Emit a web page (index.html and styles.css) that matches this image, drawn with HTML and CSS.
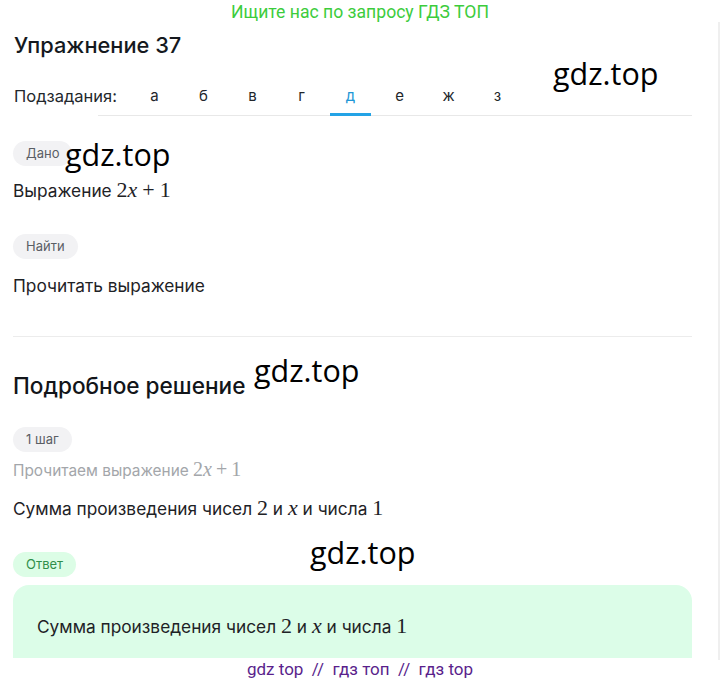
FILE: index.html
```html
<!DOCTYPE html>
<html lang="ru">
<head>
<meta charset="utf-8">
<link rel="stylesheet" href="styles.css">
</head>
<body>
<div class="banner">Ищите нас по запросу ГДЗ ТОП</div>
<main class="page">
  <h1 class="title">Упражнение 37</h1>
  <div class="subtasks">
    <span class="subtasks-label">Подзадания:</span>
    <nav class="tabs">
      <span class="tab">а</span>
      <span class="tab">б</span>
      <span class="tab">в</span>
      <span class="tab">г</span>
      <span class="tab active">д</span>
      <span class="tab">е</span>
      <span class="tab">ж</span>
      <span class="tab">з</span>
    </nav>
  </div>

  <section class="given">
    <span class="pill pill-given">Дано</span>
    <p class="text given-text">Выражение <span class="math">2<i>x</i><span class="op">+</span>1</span></p>
    <span class="pill pill-find">Найти</span>
    <p class="text find-text">Прочитать выражение</p>
  </section>

  <hr class="divider">

  <h2 class="subtitle">Подробное решение</h2>
  <span class="pill pill-step">1 шаг</span>
  <p class="text muted">Прочитаем выражение <span class="math">2<i>x</i><span class="op">+</span>1</span></p>
  <p class="text step-text">Сумма произведения чисел <span class="math">2</span> и <span class="math"><i>x</i></span> и числа <span class="math">1</span></p>

  <span class="pill pill-answer">Ответ</span>
  <div class="answer">
    <p class="text">Сумма произведения чисел <span class="math">2</span> и <span class="math"><i>x</i></span> и числа <span class="math">1</span></p>
  </div>

  <span class="wm wm1">gdz.top</span>
  <span class="wm wm2">gdz.top</span>
  <span class="wm wm3">gdz.top</span>
  <span class="wm wm4">gdz.top</span>
</main>
<footer class="footer">gdz top &nbsp;//&nbsp; гдз топ &nbsp;//&nbsp; гдз top</footer>
</body>
</html>
```

FILE: styles.css
```css
* { box-sizing: border-box; }
html, body { margin: 0; padding: 0; background: #fff; }
body {
  font-family: Inter, Roboto, "Noto Sans", sans-serif;
  color: #1f2328;
  width: 720px;
}
.banner {
  height: 22px;
  line-height: 24px;
  text-align: center;
  color: #3ccc3c;
  font-family: Roboto, sans-serif;
  font-size: 17.6px;
}
.page {
  position: relative;
  height: 638px;
  border-right: 2px solid #efefef;
  padding: 0 26px 0 13px;
  overflow: hidden;
}
.title {
  margin: 10px 0 0 1px;
  font-size: 21.8px;
  font-weight: 500;
  line-height: 26px;
  color: #15191e;
}
.subtasks {
  display: flex;
  margin-top: 21px;
  height: 37px;
}
.subtasks-label {
  flex: 0 0 85px;
  min-width: 0;
  white-space: nowrap;
  font-size: 16.5px;
  line-height: 26px;
  padding: 4px 0 0 1px;
  color: #23272c;
}
.tabs {
  flex: 1;
  display: flex;
  border-bottom: 1px solid #e8e8e8;
  padding: 4px 0 0 32px;
}
.tab {
  width: 49px;
  text-align: center;
  font-size: 15px;
  line-height: 26px;
  color: #22262b;
}
.tab.active {
  color: #2196d6;
  border-bottom: 3px solid #23a3e6;
  width: 41px;
  margin: 0 4px -1px 4px;
}
.given { padding-top: 25px; }
.pill {
  display: block;
  width: fit-content;
  height: 25px;
  line-height: 25px;
  padding: 0 13px;
  border-radius: 13px;
  background: #f2f2f4;
  color: #5a5e64;
  font-size: 13px;
}
.text {
  margin: 0;
  font-size: 17.3px;
  line-height: 24px;
  color: #1e2226;
}
.given-text { margin-top: 13px; }
.pill-find { margin-top: 31px; }
.find-text { margin-top: 15px; }
.math {
  font-family: "Liberation Serif", "DejaVu Serif", serif;
  font-size: 22px;
  line-height: 0;
}
.math i { font-style: italic; }
.op { margin: 0 5px; }
.divider {
  border: 0;
  border-top: 1px solid #ececec;
  margin: 38px 0 0 0;
  height: 0;
}
.subtitle {
  margin: 35px 0 0 0;
  font-size: 22.6px;
  font-weight: 500;
  line-height: 28px;
  color: #121519;
}
.pill-step { margin-top: 27px; }
.muted {
  color: #a3a6aa;
  margin-top: 7px;
  font-size: 15.4px;
}
.muted .math { font-size: 20px; }
.muted .op { margin: 0 4px; }
.step-text { margin-top: 14px; }
.pill-answer {
  margin-top: 31px;
  background: #dcfde6;
  color: #2f8f4b;
}
.answer {
  margin-top: 8px;
  background: #dcfde8;
  border-radius: 16px 16px 0 0;
  height: 73px;
  padding: 30px 24px 0;
}
.wm {
  position: absolute;
  font-family: "Open Sans", Roboto, sans-serif;
  font-size: 30.5px;
  color: #000;
  line-height: 1;
}
.wm1 { left: 553px; top: 36px; }
.wm2 { left: 65px; top: 117px; }
.wm3 { left: 254px; top: 333px; }
.wm4 { left: 310px; top: 515px; }
.footer {
  text-align: center;
  color: #5a1f8c;
  font-family: Roboto, sans-serif;
  font-size: 17px;
  line-height: 18px;
  height: 25px;
}
```
